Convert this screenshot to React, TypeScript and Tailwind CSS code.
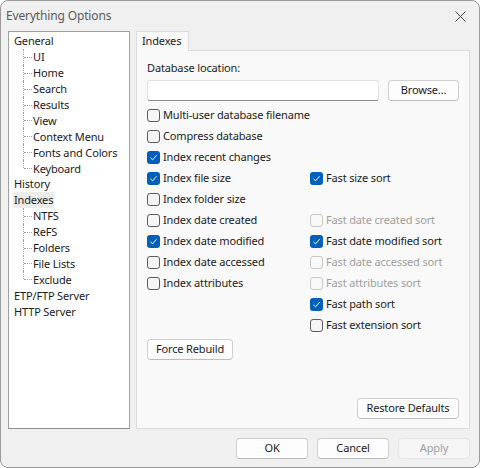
import React from "react";

const font = { fontFamily: '"Noto Sans", "Segoe UI", sans-serif', letterSpacing: "-0.15px" };

function Check({ checked, disabled }: { checked?: boolean; disabled?: boolean }) {
  if (checked) {
    return (
      <span className="w-[13px] h-[13px] rounded-[3px] bg-[#005fb8] flex items-center justify-center shrink-0">
        <svg width="9" height="9" viewBox="0 0 9 9">
          <path d="M1.5 4.8 L3.6 6.8 L7.6 2.2" fill="none" stroke="white" strokeWidth="1" />
        </svg>
      </span>
    );
  }
  return (
    <span
      className={
        "w-[13px] h-[13px] rounded-[3px] border shrink-0 " +
        (disabled ? "border-[#c8c8c8] bg-[#f9f9f9]" : "border-[#5c5c5c] bg-[#f5f5f5]")
      }
    />
  );
}

function CB({ label, checked, disabled }: { label: string; checked?: boolean; disabled?: boolean }) {
  return (
    <div className="h-[21px] flex items-center gap-[3px] whitespace-nowrap">
      <Check checked={checked} disabled={disabled} />
      <span className={disabled ? "text-[#a0a0a0]" : "text-[#1b1b1b]"}>{label}</span>
    </div>
  );
}

function Btn({ label, w, disabled }: { label: string; w: string; disabled?: boolean }) {
  return (
    <div
      className={
        "h-[21px] rounded-[4px] border flex items-center justify-center whitespace-nowrap " +
        w +
        (disabled
          ? " border-[#e5e5e5] bg-[#f5f5f5] text-[#a0a0a0]"
          : " border-[#d0d0d0] border-b-[#bcbcbc] bg-[#fdfdfd] text-[#1b1b1b]")
      }
    >
      {label}
    </div>
  );
}

const tree: { t: string; child?: boolean; last?: boolean; sel?: boolean }[] = [
  { t: "General" },
  { t: "UI", child: true },
  { t: "Home", child: true },
  { t: "Search", child: true },
  { t: "Results", child: true },
  { t: "View", child: true },
  { t: "Context Menu", child: true },
  { t: "Fonts and Colors", child: true },
  { t: "Keyboard", child: true, last: true },
  { t: "History" },
  { t: "Indexes", sel: true },
  { t: "NTFS", child: true },
  { t: "ReFS", child: true },
  { t: "Folders", child: true },
  { t: "File Lists", child: true },
  { t: "Exclude", child: true, last: true },
  { t: "ETP/FTP Server" },
  { t: "HTTP Server" },
];

export default function App() {
  return (
    <div className="w-[480px] h-[468px] bg-white" style={font}>
      <div className="w-[480px] h-[468px] bg-[#f0f0f0] border border-[#9a9a9a] rounded-[8px] flex flex-col text-[11px] text-[#1b1b1b] overflow-hidden">
        <div className="h-[30px] flex items-center justify-between pl-[5px] pr-[13px] shrink-0">
          <span className="text-[#5a5a5a] text-[12px]">Everything Options</span>
          <svg width="11" height="11" viewBox="0 0 11 11">
            <path d="M0.5 0.5 L10.5 10.5 M10.5 0.5 L0.5 10.5" stroke="#444" strokeWidth="1" />
          </svg>
        </div>
        <div className="flex pl-[7px] pr-[9px] gap-[6px] h-[398px]">
          <div className="w-[122px] h-[398px] bg-white border border-[#a0a0a0] border-b-[#8c8c96] pt-[1px] shrink-0">
            {tree.map((n, i) => (
              <div key={i} className="h-[15.9px] flex items-center relative leading-none">
                {n.child ? (
                  <>
                    <span
                      className={
                        "absolute left-[14px] top-0 w-0 border-l border-dotted border-[#a0a0a0] " +
                        (n.last ? "h-[8px]" : "h-[16px]")
                      }
                    />
                    <span className="absolute left-[15px] top-[8px] w-[8px] border-t border-dotted border-[#a0a0a0]" />
                    <span className="pl-[24px]">{n.t}</span>
                  </>
                ) : (
                  <span
                    className={
                      "ml-[4px] px-[1px] h-[16px] flex items-center " + (n.sel ? "bg-[#ececec]" : "")
                    }
                  >
                    {n.t}
                  </span>
                )}
              </div>
            ))}
          </div>
          <div className="flex-1 flex flex-col">
            <div className="flex h-[20px] shrink-0">
              <div className="w-[53px] h-[20px] bg-[#f9f9f9] border border-b-0 border-[#dcdcdc] flex items-center pl-[5px] relative z-10">
                Indexes
              </div>
            </div>
            <div className="flex-1 bg-[#f9f9f9] border border-[#dcdcdc] -mt-[1px] pl-[10px] pr-[10px] pt-[9px] flex flex-col">
              <div className="h-[17px] flex items-center">Database location:</div>
              <div className="flex gap-[9px] mt-[3px]">
                <div className="w-[232px] h-[21px] bg-white border border-[#e0e0e0] border-b-[#8a8a8a] rounded-[3px]" />
                <Btn label="Browse..." w="w-[71px]" />
              </div>
              <div className="flex mt-[4px]">
                <div className="w-[163px] flex flex-col">
                  <CB label="Multi-user database filename" />
                  <CB label="Compress database" />
                  <CB label="Index recent changes" checked />
                  <CB label="Index file size" checked />
                  <CB label="Index folder size" />
                  <CB label="Index date created" />
                  <CB label="Index date modified" checked />
                  <CB label="Index date accessed" />
                  <CB label="Index attributes" />
                </div>
                <div className="flex flex-col pt-[63px]">
                  <CB label="Fast size sort" checked />
                  <div className="h-[21px]" />
                  <CB label="Fast date created sort" disabled />
                  <CB label="Fast date modified sort" checked />
                  <CB label="Fast date accessed sort" disabled />
                  <CB label="Fast attributes sort" disabled />
                  <CB label="Fast path sort" checked />
                  <CB label="Fast extension sort" />
                </div>
              </div>
              <div className="mt-[3px]">
                <Btn label="Force Rebuild" w="w-[86px]" />
              </div>
              <div className="flex justify-end mt-[38px]">
                <Btn label="Restore Defaults" w="w-[102px]" />
              </div>
            </div>
          </div>
        </div>
        <div className="flex justify-end gap-[9px] pr-[9px] mt-[9px]">
          <Btn label="OK" w="w-[72px]" />
          <Btn label="Cancel" w="w-[72px]" />
          <Btn label="Apply" w="w-[72px]" disabled />
        </div>
      </div>
    </div>
  );
}
